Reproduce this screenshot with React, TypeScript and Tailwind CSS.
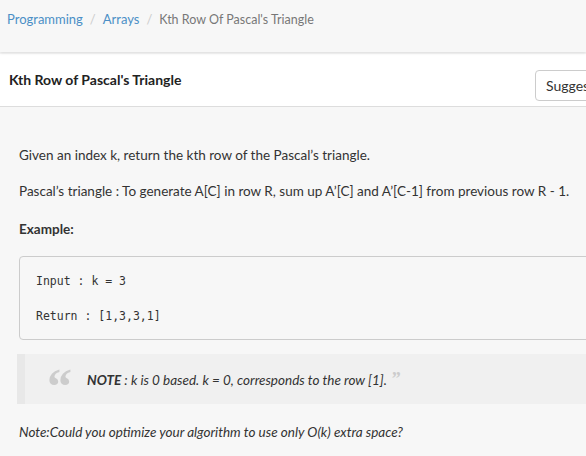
const FONT = { fontFamily: "Lato, 'Open Sans', sans-serif" };
const QUOTE = { fontFamily: "'Liberation Serif', serif" };

const Breadcrumb = () => (
  <div className="relative h-[52px] bg-[#f7f7f7] px-[7px] pt-[10px] text-[13px] shadow-[0_1px_3px_rgba(0,0,0,0.12)]">
    <a className="text-[#4b8fc6]">Programming</a>
    <span className="px-[7px] text-[#cccccc]">/</span>
    <a className="text-[#4b8fc6]">Arrays</a>
    <span className="px-[7px] text-[#cccccc]">/</span>
    <span className="text-[12.5px] text-[#777777]">Kth Row Of Pascal's Triangle</span>
  </div>
);

const Header = () => (
  <div className="mt-[2px] flex h-[53px] items-start justify-between border-b border-[#dddddd] bg-white pl-[9px]">
    <h1 className="pt-[15px] text-[14px] font-bold text-[#222222]">Kth Row of Pascal's Triangle</h1>
    <button className="mt-[16px] -mr-[30px] h-[31px] w-[81px] rounded-[4px] border border-[#cccccc] bg-white pl-[10px] text-left text-[14px] text-[#333333]">
      Suggest
    </button>
  </div>
);

export default function App() {
  return (
    <div className="h-[456px] w-[586px] overflow-hidden bg-[#f7f7f7] text-[#333333]" style={FONT}>
      <Breadcrumb />
      <Header />
      <div className="pl-[19px] pt-[38px] text-[13.5px]">
        <p className="leading-[20px]">Given an index k, return the kth row of the Pascal’s triangle.</p>
        <p className="mt-[16px] whitespace-nowrap leading-[20px]">
          Pascal’s triangle : To generate A[C] in row R, sum up A’[C] and A’[C-1] from previous row R - 1.
        </p>
        <p className="mt-[18px] font-bold leading-[20px]">Example:</p>
        <pre
          className="mt-[17px] -mr-[10px] h-[84px] rounded-[4px] border border-[#cccccc] bg-[#f7f7f7] pl-[16px] pt-[16px] text-[11.5px] text-[#333333]"
          style={{ fontFamily: "'DejaVu Sans Mono', monospace" }}
        >
          <div className="leading-[17px]">Input : k = 3</div>
          <div className="mt-[18px] leading-[17px]">Return : [1,3,3,1]</div>
        </pre>
        <blockquote className="-ml-[2px] mt-[14px] flex h-[50px] items-center border-l-[8px] border-[#e8e8e8] bg-[#f0f0f0] pl-[22px] italic">
          <span
            className="mr-[16px] -mt-[14px] h-[18px] w-[24px] overflow-visible text-[50px] font-bold not-italic leading-[46px] text-[#cccccc]"
            style={QUOTE}
          >
            “
          </span>
          <span className="text-[13.5px]">
            <b>NOTE</b> : k is 0 based. k = 0, corresponds to the row [1].
            <span className="ml-[5px] text-[18px] font-bold not-italic text-[#cccccc]" style={QUOTE}>
              ”
            </span>
          </span>
        </blockquote>
        <p className="mt-[18px] italic leading-[20px]">
          Note:Could you optimize your algorithm to use only O(k) extra space?
        </p>
      </div>
    </div>
  );
}
